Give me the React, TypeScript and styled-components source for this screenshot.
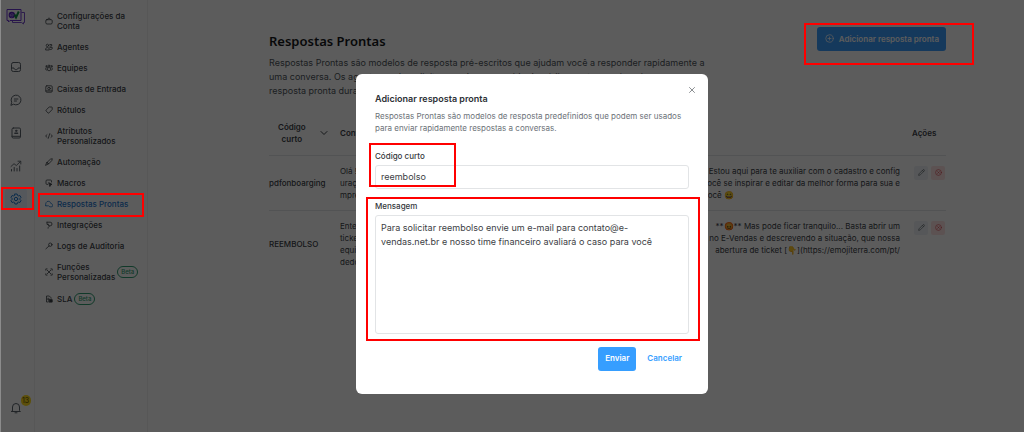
import React from "react";
import styled, { createGlobalStyle, css } from "styled-components";
import { ChevronDown, CirclePlus, CircleX, Pencil, X } from "lucide-react";

const GlobalStyle = createGlobalStyle`
  *, *::before, *::after { box-sizing: border-box; }
  body { margin: 0; background: #fff; }
  body, button, input, textarea { font-family: Inter, "Liberation Sans", sans-serif; }
  button { border: 0; padding: 0; background: none; cursor: pointer; }
  a { color: inherit; text-decoration: none; }
  h1, h2, p, ul { margin: 0; padding: 0; }
  ul { list-style: none; }
`;

const Page = styled.div`
  position: relative;
  display: flex;
  min-height: 100vh;
  border-left: 1px solid #8c8c8c;
  color: #3c4248;
`;

const Highlight = styled.span<{ $inset: string }>`
  position: absolute;
  z-index: 3;
  inset: ${(p) => p.$inset};
  border: 2px solid #ff0000;
  pointer-events: none;
`;

/* ---------- primary rail ---------- */

const Rail = styled.nav`
  display: flex;
  flex-direction: column;
  align-items: center;
  flex: none;
  width: 34px;
  padding: 8px 4px 13px 0;
  border-right: 1px solid #f0f0f0;
`;

const RailList = styled.ul`
  display: flex;
  flex-direction: column;
  gap: 11px;
  margin-top: 30px;
`;

const RailItem = styled.li`
  position: relative;
`;

const RailLink = styled.a<{ $active?: boolean }>`
  display: grid;
  place-items: center;
  width: 22px;
  height: 22px;
  border-radius: 4px;
  color: ${(p) => (p.$active ? "#1f78d0" : "#5c646c")};
  background: ${(p) => (p.$active ? "#eaf4ff" : "transparent")};
`;

const Bell = styled(RailLink)`
  position: relative;
  margin-top: auto;
`;

const Count = styled.span`
  position: absolute;
  top: -2px;
  right: -4px;
  min-width: 10px;
  height: 11px;
  border-radius: 5px;
  background: #ffdc1f;
  color: #5c4a00;
  font-size: 7px;
  line-height: 11px;
  text-align: center;
`;

/* ---------- settings menu ---------- */

const Menu = styled.nav`
  flex: none;
  width: 113px;
  padding-top: 6px;
  border-right: 1px solid #f0f0f0;
`;

const MenuList = styled.ul`
  display: flex;
  flex-direction: column;
  gap: 1px;
`;

const MenuItem = styled.li`
  position: relative;
`;

const MenuLink = styled.a<{ $active?: boolean }>`
  display: flex;
  align-items: center;
  gap: 4px;
  padding: 5px 0 5px 10px;
  color: ${(p) => (p.$active ? "#1f78d0" : "#3c4248")};
  font-size: 8px;
  font-weight: 500;
  line-height: 10px;

  svg { flex: none; }
`;

const Beta = styled.span`
  padding: 0 3px;
  margin-left: -2px;
  border: 1px solid #2f9e72;
  border-radius: 6px;
  color: #2f9e72;
  font-size: 6px;
`;

/* ---------- content ---------- */

const Content = styled.main`
  flex: 1;
  min-width: 0;
  padding: 27px 78px 0 121px;
`;

const TopBar = styled.header`
  display: flex;
  justify-content: space-between;
  align-items: flex-start;
`;

const Heading = styled.h1`
  padding-top: 4px;
  color: #16181a;
  font: 600 13px/20px "Noto Sans", sans-serif;
`;

const Intro = styled.p`
  margin-top: 5px;
  color: #50565c;
  font-size: 9px;
  line-height: 14px;
  white-space: nowrap;
`;

const AddWrap = styled.div`
  position: relative;
`;

const AddButton = styled.button`
  display: flex;
  align-items: center;
  gap: 5px;
  height: 24px;
  padding: 0 7px 1px 8px;
  border-radius: 3px;
  background: #3b9eff;
  color: #fff;
  font-size: 8px;
  font-weight: 600;
`;

const Table = styled.table`
  width: 100%;
  margin-top: 13px;
  border-collapse: collapse;
  table-layout: fixed;
  font-size: 8px;
  line-height: 12px;
`;

const HeadCell = styled.th<{ $width?: number }>`
  width: ${(p) => (p.$width ? `${p.$width}px` : "auto")};
  height: 44px;
  padding: 0;
  border-bottom: 1px solid #e4e6e8;
  font-weight: 600;
  text-align: left;
`;

const Sort = styled.button`
  display: flex;
  align-items: center;
  justify-content: space-between;
  width: 61px;
  padding-left: 9px;
  color: inherit;
  font-size: 8px;
  font-weight: 600;
  line-height: 12px;
`;

const Cell = styled.td`
  padding: 9px 0;
  vertical-align: middle;
  white-space: nowrap;
`;

const Row = styled.tr`
  & + & > td { border-top: 1px solid #e4e6e8; }
`;

const ShortCode = styled.span`
  font-weight: 500;
`;

const Line = styled.span<{ $trail?: number }>`
  display: flex;
  justify-content: space-between;
  margin-right: ${(p) => p.$trail ?? 12}px;
  white-space: pre;
`;

const ActionsCell = styled(Cell)`
  vertical-align: top;
`;

const Actions = styled.div`
  display: flex;
  gap: 3px;
  padding: 1px 0 0 2px;
`;

const IconButton = styled.button<{ $danger?: boolean }>`
  display: grid;
  place-items: center;
  width: 14px;
  height: 14px;
  border-radius: 2px;
  background: ${(p) => (p.$danger ? "#ffe4e4" : "#eef2f5")};
  color: ${(p) => (p.$danger ? "#d8434c" : "#4c545c")};
`;

/* ---------- modal ---------- */

const Overlay = styled.div`
  position: absolute;
  z-index: 2;
  inset: 0;
  display: grid;
  place-items: center;
  padding: 36px 0 0 39px;
  background: rgba(0, 0, 0, 0.64);
`;

const Dialog = styled.form`
  position: relative;
  width: 352px;
  padding: 18px 19px 23px;
  border-radius: 6px;
  background: #fff;
`;

const Close = styled.button`
  position: absolute;
  top: 11px;
  right: 11px;
  display: grid;
  place-items: center;
  width: 10px;
  height: 10px;
  color: #74787c;
`;

const Title = styled.h2`
  color: #2c3035;
  font-size: 9px;
  font-weight: 600;
  line-height: 14px;
`;

const Hint = styled.p`
  margin-top: 4px;
  color: #6c7278;
  font-size: 8px;
  line-height: 12px;
`;

const Field = styled.div<{ $gap: number }>`
  position: relative;
  display: flex;
  flex-direction: column;
  gap: 3px;
  margin-top: ${(p) => p.$gap}px;
`;

const Label = styled.label`
  color: #34383c;
  font-size: 8px;
  font-weight: 500;
  line-height: 12px;
`;

const control = css`
  width: 100%;
  border: 1px solid #e2e4e6;
  border-radius: 3px;
  background: #fff;
  color: #3c4044;
  font-size: 9px;
  line-height: 14px;
  outline: 0;
`;

const TextInput = styled.input`
  ${control}
  height: 24px;
  padding: 0 5px 2px;
`;

const TextArea = styled.textarea`
  ${control}
  height: 119px;
  padding: 5px;
  resize: none;
`;

const Footer = styled.div`
  display: flex;
  justify-content: flex-end;
  gap: 4px;
  margin-top: 13px;
`;

const DialogButton = styled.button<{ $primary?: boolean }>`
  height: 24px;
  padding: 0 7px 2px;
  border-radius: 3px;
  background: ${(p) => (p.$primary ? "#369eff" : "transparent")};
  color: ${(p) => (p.$primary ? "#fff" : "#369eff")};
  font-size: 8px;
  font-weight: 600;
`;

/* ---------- drawings ---------- */

const Logo = () => (
  <svg width="20" height="18" viewBox="0 0 20 18" fill="none">
    <path d="M15.500 4.500h3v10h-1v1.500l-2-1.500H6.500v-2" stroke="#7a4fd0" />
    <path d="M1 1.500h14v11H4l-1.500 1.500v-1.500H1z" stroke="#6a35d0" />
    <circle cx="5.800" cy="7" r="3.200" fill="#5a22c0" />
    <path d="M4.200 7.300h3.200a1.600 1.600 0 1 0-.6 1.300" stroke="#b8a0f0" strokeWidth=".7" />
    <path d="M8.500 6.500l1.500 3 2.800-6" stroke="#129048" strokeWidth="2" />
  </svg>
);

const stroke = {
  width: 12,
  height: 12,
  viewBox: "0 0 12 12",
  fill: "none",
  stroke: "currentColor",
  strokeLinecap: "round" as const,
  strokeLinejoin: "round" as const,
};

const InboxIcon = () => (
  <svg {...stroke}>
    <rect x="1.500" y="1.500" width="9" height="9" rx="1.800" />
    <path d="M1.500 7h2.500c.2 1.200 1 1.700 2 1.700s1.800-.5 2-1.700h2.500" />
  </svg>
);
const ChatIcon = () => (
  <svg {...stroke}>
    <path d="M1 11l.7-2.700A4.900 4.900 0 1 1 3.800 10.400z" />
    <path d="M4.300 5h3.600M4.300 7h2.200" />
  </svg>
);
const ContactIcon = () => (
  <svg {...stroke}>
    <rect x="2" y="1" width="8.500" height="10" rx="1.300" />
    <path d="M2 9.300h8.500" />
    <circle cx="6.200" cy="3.800" r=".7" fill="currentColor" />
    <path d="M4.900 6.300h2.600" strokeWidth="1.600" />
  </svg>
);
const ChartIcon = () => (
  <svg {...stroke}>
    <path d="M1.500 11V9.500M4.200 11V7.500M7 11V8.500M9.700 11V6" />
    <path d="M1 6.500l3-2.800 2.300 1.800L10.500 1.500M8 1.200h2.800V4" strokeWidth=".9" />
  </svg>
);
const GearIcon = () => (
  <svg {...stroke}>
    <path d="M4.900 1h2.200l.4 1.400 1 .5 1.400-.4 1.100 1.900-1 1v1.200l1 1-1.100 1.900-1.400-.4-1 .5-.4 1.400H4.900l-.4-1.400-1-.5-1.400.4L1 7.600l1-1V5.400l-1-1 1.100-1.900 1.400.4 1-.5z" />
    <circle cx="6" cy="6" r="1.700" />
  </svg>
);
const BellIcon = () => (
  <svg {...stroke}>
    <path d="M2.500 8.500V5a3.500 3.500 0 0 1 7 0v3.500l.9 1H1.600zM5 10.800h2" />
  </svg>
);

const MenuIcon = ({ children }: { children: React.ReactNode }) => (
  <svg {...stroke} width={8} height={8} viewBox="0 0 8 8" strokeWidth={0.8}>
    {children}
  </svg>
);

const menuIcons = {
  briefcase: <path d="M1.800 2.700h4.400a1 1 0 0 1 1 1v2a1.300 1.300 0 0 1-1.300 1.300H2.100A1.300 1.300 0 0 1 .8 5.700v-2a1 1 0 0 1 1-1zM2.600 2.500c0-1.900 2.800-1.900 2.800 0" />,
  agents: (
    <>
      <circle cx="2.400" cy="2.400" r="1.200" />
      <path d="M.6 6.600c0-1.600.6-2 1.800-2s1.900.4 1.900 2zM4.800 1.500h1.900v1.600H4.900M4.800 4.600h2.500c.1 1.400-.5 2-1.800 2" />
    </>
  ),
  team: (
    <>
      <circle cx="4" cy="1.900" r=".9" />
      <circle cx="1.400" cy="2.200" r=".6" />
      <circle cx="6.600" cy="2.200" r=".6" />
      <path d="M2.400 3.700h3.200v1.500a1.600 1.600 0 0 1-3.200 0zM1 3.700C.2 5 .7 6.100 1.800 6.300M7 3.700c.8 1.300.3 2.400-.8 2.600" />
    </>
  ),
  inbox: (
    <>
      <rect x=".8" y=".8" width="6.400" height="6.400" rx="1" />
      <circle cx="4" cy="3.600" r="1.300" />
      <path d="M1 5.900h6" />
    </>
  ),
  tag: <path d="M4.600 1h2.100a.5.500 0 0 1 .5.500v2L4 6.900a.7.700 0 0 1-1 0L1.100 5a.7.700 0 0 1 0-1z" />,
  code: <path d="M2 2.700L.6 4 2 5.300M6 2.700L7.400 4 6 5.300M4.700 1.700l-1.400 4.600" />,
  automation: <path d="M2.200 4.300L5.400 1.200l1.900-.5-.5 1.900-3.100 3.200zM2.200 4.300l1.500 1.500L.9 7.200z" />,
  macros: (
    <>
      <path d="M2.600 5.400H2a1 1 0 0 1-1-1V2a1 1 0 0 1 1-1h3.500a1 1 0 0 1 1 1v1" />
      <path d="M4 3.800l3 1.600-1.300.4L5 7.200z" fill="currentColor" />
    </>
  ),
  chats: <path d="M.7 5.700C.1 3.200 1.500 1.300 3.200 1.300s2.300 1 2.500 2c1.700.2 2.100 1.700 1.600 3.300-1.700.5-3.200.4-3.800-.9-.9.300-1.800.2-2.800 0z" />,
  plug: <path d="M2 1.200h3.200a1.700 1.700 0 0 1 0 3.600H3.800L2.800 3.800M2 1.200v2.200h1.600M4.300 4.900c.6 1-1.500.8-1.300 2.300" />,
  key: (
    <>
      <circle cx="5.300" cy="2.700" r="1.700" />
      <path d="M4 4L.9 6.800" />
    </>
  ),
  functions: <path d="M.8 2.200V.9h1.300M5.900.9h1.300v1.300M.8 5.800v1.300h1.300M5.900 7.100h1.300V5.800M2.300 2.300l3.400 3.400M5.700 2.300L2.300 5.700" />,
  sla: (
    <>
      <path d="M2.800 7H1.500V1h2.800l1.800 1.800v.6M2.700 3.300h1.300M2.700 4.600h.8" />
      <rect x="4.200" y="4.600" width="3" height="2.500" fill="currentColor" />
    </>
  ),
};

const railItems = [
  { label: "Caixa de entrada", icon: <InboxIcon /> },
  { label: "Conversas", icon: <ChatIcon /> },
  { label: "Contatos", icon: <ContactIcon /> },
  { label: "Relatórios", icon: <ChartIcon /> },
  { label: "Configurações", icon: <GearIcon />, active: true },
];

type MenuEntry = {
  lines: string[];
  icon: keyof typeof menuIcons;
  active?: boolean;
  beta?: boolean;
};

const menuItems: MenuEntry[] = [
  { lines: ["Configurações da", "Conta"], icon: "briefcase" },
  { lines: ["Agentes"], icon: "agents" },
  { lines: ["Equipes"], icon: "team" },
  { lines: ["Caixas de Entrada"], icon: "inbox" },
  { lines: ["Rótulos"], icon: "tag" },
  { lines: ["Atributos", "Personalizados"], icon: "code" },
  { lines: ["Automação"], icon: "automation" },
  { lines: ["Macros"], icon: "macros" },
  { lines: ["Respostas Prontas"], icon: "chats", active: true },
  { lines: ["Integrações"], icon: "plug" },
  { lines: ["Logs de Auditoria"], icon: "key" },
  { lines: ["Funções", "Personalizadas"], icon: "functions", beta: true },
  { lines: ["SLA"], icon: "sla", beta: true },
];

const replies: { code: string; text: { parts: string[]; trail?: number }[] }[] = [
  {
    code: "pdfonboarging",
    text: [
      { parts: ["Olá ! Tudo bem?", "Estou aqui para te auxiliar com o cadastro e config"] },
      { parts: ["uração da conta.", "você se inspirar e editar da melhor forma para sua e"] },
      { parts: ["mpresa. Preparei", "material para você 😄"], trail: 178 },
    ],
  },
  {
    code: "REEMBOLSO",
    text: [
      { parts: ["Entendo a situação", "**😡** Mas pode ficar tranquilo... Basta abrir um"] },
      { parts: ["ticket de suporte", "no E-Vendas e descrevendo a situação, que nossa"] },
      { parts: ["equipe vai ajudar", "abertura de ticket [👇](https://emojiterra.com/pt/"] },
      { parts: ["dedo-para-baixo/)"] },
    ],
  },
];

export default function App() {
  return (
    <Page>
      <GlobalStyle />
      <Rail aria-label="Principal">
        <Logo />
        <RailList>
          {railItems.map((item) => (
            <RailItem key={item.label}>
              <RailLink href="#" aria-label={item.label} $active={item.active}>
                {item.icon}
              </RailLink>
              {item.active && <Highlight $inset="-1px -7px 0 -4px" />}
            </RailItem>
          ))}
        </RailList>
        <Bell href="#" aria-label="Notificações">
          <BellIcon />
          <Count>13</Count>
        </Bell>
      </Rail>

      <Menu aria-label="Configurações">
        <MenuList>
          {menuItems.map(({ lines, icon, active, beta }) => (
            <MenuItem key={lines[0]}>
              <MenuLink href="#" $active={active}>
                <MenuIcon>{menuIcons[icon]}</MenuIcon>
                <span>
                  {lines.map((line, i) => (
                    <React.Fragment key={line}>
                      {i > 0 && <br />}
                      {line}
                    </React.Fragment>
                  ))}
                </span>
                {beta && <Beta>Beta</Beta>}
              </MenuLink>
              {active && <Highlight $inset="-1px 3px -3px 3px" />}
            </MenuItem>
          ))}
        </MenuList>
      </Menu>

      <Content>
        <TopBar>
          <Heading>Respostas Prontas</Heading>
          <AddWrap>
            <AddButton type="button">
              <CirclePlus size={9} />
              Adicionar resposta pronta
            </AddButton>
            <Highlight $inset="-4px -28px -14px -13px" />
          </AddWrap>
        </TopBar>
        <Intro>
          Respostas Prontas são modelos de resposta pré-escritos que ajudam você a responder rapidamente a
          <br />
          uma conversa. Os agentes podem digitar uma barra seguida do código curto para inserir
          <br />
          resposta pronta durante
        </Intro>
        <Table>
          <thead>
            <tr>
              <HeadCell $width={71}>
                <Sort type="button">
                  <span>
                    Código
                    <br />
                    curto
                  </span>
                  <ChevronDown size={12} />
                </Sort>
              </HeadCell>
              <HeadCell>Conteúdo</HeadCell>
              <HeadCell $width={34}>Ações</HeadCell>
            </tr>
          </thead>
          <tbody>
            {replies.map((reply) => (
              <Row key={reply.code}>
                <Cell>
                  <ShortCode>{reply.code}</ShortCode>
                </Cell>
                <Cell>
                  {reply.text.map(({ parts, trail }) => (
                    <Line key={parts[0]} $trail={trail}>
                      {parts.map((part) => (
                        <span key={part}>{part}</span>
                      ))}
                    </Line>
                  ))}
                </Cell>
                <ActionsCell>
                  <Actions>
                    <IconButton type="button" aria-label="Editar">
                      <Pencil size={7} />
                    </IconButton>
                    <IconButton type="button" aria-label="Excluir" $danger>
                      <CircleX size={7} />
                    </IconButton>
                  </Actions>
                </ActionsCell>
              </Row>
            ))}
          </tbody>
        </Table>
      </Content>

      <Overlay>
        <Dialog role="dialog" aria-labelledby="dialog-title" onSubmit={(e) => e.preventDefault()}>
          <Close type="button" aria-label="Fechar">
            <X size={10} />
          </Close>
          <Title id="dialog-title">Adicionar resposta pronta</Title>
          <Hint>
            Respostas Prontas são modelos de resposta predefinidos que podem ser usados
            <br />
            para enviar rapidamente respostas a conversas.
          </Hint>
          <Field $gap={16}>
            <Label htmlFor="short-code">Código curto</Label>
            <TextInput id="short-code" defaultValue="reembolso" />
            <Highlight $inset="-7px 233px 2px -6px" />
          </Field>
          <Field $gap={11}>
            <Label htmlFor="message">Mensagem</Label>
            <TextArea
              id="message"
              defaultValue="Para solicitar reembolso envie um e-mail para contato@e-vendas.net.br e nosso time financeiro avaliará o caso para você"
            />
            <Highlight $inset="-3px -11px -7px -9px" />
          </Field>
          <Footer>
            <DialogButton $primary>Enviar</DialogButton>
            <DialogButton type="button">Cancelar</DialogButton>
          </Footer>
        </Dialog>
      </Overlay>
    </Page>
  );
}
